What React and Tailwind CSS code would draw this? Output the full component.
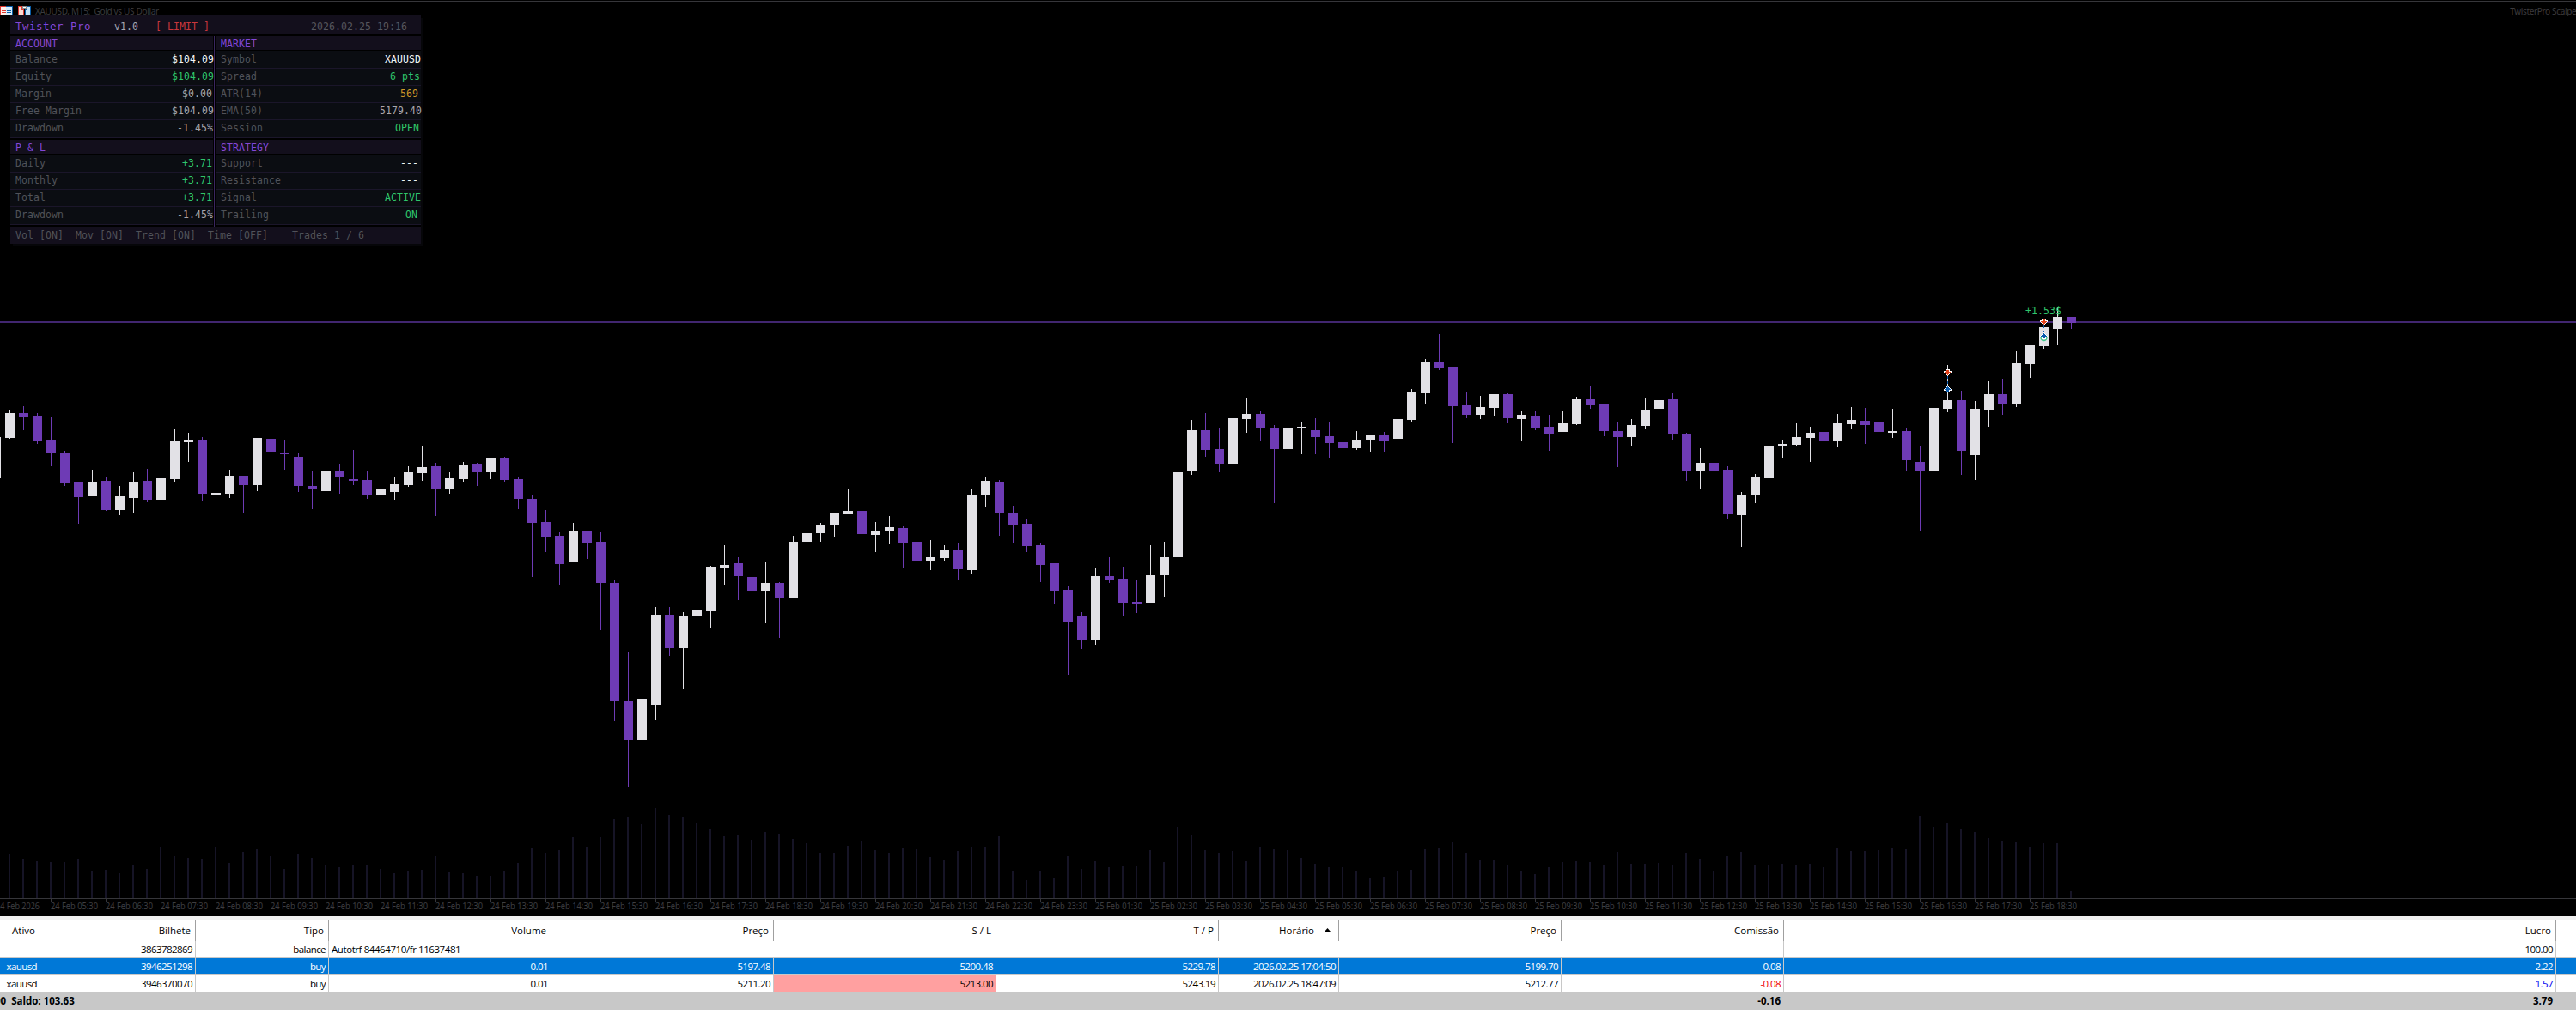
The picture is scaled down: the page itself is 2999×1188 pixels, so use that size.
import clsx from 'clsx';

const PITCH = 16;
const FIRST_X = 11;

// [bull/bear, high, body top, body bottom, low]
const CANDLES = [
  ['w', 477, 481, 510, 511], ['p', 473, 481, 486, 501], ['p', 481, 485, 514, 517], ['p', 486, 513, 528, 543],
  ['p', 525, 528, 562, 566], ['p', 561, 561, 579, 610], ['w', 547, 561, 578, 578], ['p', 555, 560, 594, 595],
  ['w', 566, 578, 594, 600], ['w', 550, 561, 580, 597], ['p', 546, 560, 582, 585], ['w', 549, 557, 582, 595],
  ['w', 500, 514, 558, 561], ['w', 504, 513, 515, 538], ['p', 509, 513, 575, 584], ['w', 555, 574, 576, 630],
  ['w', 547, 554, 575, 580], ['p', 554, 554, 565, 597], ['w', 510, 510, 565, 572], ['p', 508, 511, 527, 550],
  ['p', 512, 528, 529, 547], ['p', 528, 532, 566, 573], ['p', 548, 566, 569, 593], ['w', 516, 549, 572, 572],
  ['p', 540, 549, 555, 575], ['p', 524, 558, 560, 565], ['p', 548, 559, 577, 581], ['w', 553, 570, 577, 586],
  ['w', 556, 564, 573, 582], ['w', 543, 550, 565, 567], ['w', 519, 544, 551, 560], ['p', 539, 543, 569, 601],
  ['w', 550, 557, 569, 575], ['w', 538, 542, 558, 561], ['p', 539, 541, 550, 566], ['w', 534, 534, 550, 558],
  ['p', 532, 534, 559, 561], ['p', 555, 558, 581, 593], ['p', 577, 581, 609, 672], ['p', 594, 608, 625, 643],
  ['p', 620, 624, 657, 681], ['w', 609, 619, 655, 655], ['p', 618, 619, 632, 651], ['p', 620, 631, 679, 734],
  ['p', 676, 679, 816, 840], ['p', 759, 817, 862, 917], ['w', 795, 814, 862, 880], ['w', 707, 716, 821, 839],
  ['p', 707, 716, 755, 764], ['w', 713, 717, 755, 802], ['w', 675, 711, 718, 727], ['w', 659, 660, 712, 731],
  ['w', 635, 658, 661, 681], ['p', 649, 656, 671, 699], ['p', 655, 672, 688, 698], ['w', 655, 679, 688, 726],
  ['p', 678, 679, 696, 743], ['w', 624, 631, 696, 697], ['w', 599, 621, 631, 637], ['w', 609, 612, 621, 631],
  ['w', 597, 598, 612, 626], ['w', 570, 595, 599, 599], ['p', 589, 595, 622, 635], ['w', 608, 618, 623, 643],
  ['w', 601, 614, 619, 634], ['p', 613, 615, 632, 661], ['p', 625, 631, 653, 675], ['w', 629, 649, 653, 664],
  ['w', 635, 641, 650, 653], ['p', 632, 641, 663, 675], ['w', 569, 577, 664, 668], ['w', 556, 560, 577, 590],
  ['p', 559, 561, 597, 624], ['p', 589, 597, 611, 632], ['p', 605, 610, 636, 643], ['p', 632, 635, 658, 678],
  ['p', 656, 656, 688, 703], ['p', 683, 687, 724, 786], ['p', 713, 718, 745, 756], ['w', 661, 671, 745, 751],
  ['p', 649, 671, 675, 679], ['p', 660, 674, 702, 718], ['p', 676, 701, 703, 714], ['w', 635, 670, 702, 702],
  ['w', 631, 649, 670, 695], ['w', 541, 550, 649, 685], ['w', 489, 501, 549, 553], ['p', 481, 501, 524, 532],
  ['p', 498, 523, 540, 550], ['w', 484, 487, 541, 542], ['w', 463, 482, 488, 504], ['p', 479, 482, 499, 514],
  ['p', 495, 498, 523, 586], ['w', 481, 498, 523, 523], ['w', 492, 497, 499, 529], ['p', 487, 501, 509, 529],
  ['p', 491, 508, 516, 534], ['p', 509, 515, 522, 558], ['w', 502, 512, 522, 524], ['w', 507, 507, 513, 527],
  ['p', 503, 507, 514, 527], ['w', 474, 488, 511, 514], ['w', 453, 457, 489, 491], ['w', 418, 422, 458, 471],
  ['p', 389, 422, 429, 431], ['p', 428, 428, 473, 516], ['p', 457, 472, 483, 487], ['w', 461, 474, 483, 488],
  ['w', 459, 459, 475, 485], ['p', 458, 459, 487, 493], ['w', 479, 483, 488, 514], ['p', 479, 484, 498, 501],
  ['p', 483, 497, 505, 525], ['w', 479, 493, 503, 503], ['w', 462, 465, 494, 495], ['p', 449, 465, 472, 476],
  ['p', 471, 471, 502, 508], ['p', 491, 502, 509, 544], ['w', 488, 495, 509, 519], ['w', 464, 477, 496, 500],
  ['w', 460, 466, 476, 491], ['p', 458, 465, 505, 513], ['p', 504, 505, 548, 560], ['w', 522, 539, 548, 570],
  ['p', 537, 539, 548, 560], ['p', 543, 547, 599, 605], ['w', 573, 576, 600, 637], ['w', 552, 556, 577, 586],
  ['w', 514, 519, 557, 561], ['w', 513, 517, 520, 534], ['w', 493, 509, 518, 519], ['w', 497, 504, 510, 538],
  ['p', 502, 503, 514, 531], ['w', 482, 493, 514, 521], ['w', 474, 489, 494, 500], ['p', 475, 490, 495, 517],
  ['p', 476, 492, 503, 508], ['w', 476, 502, 504, 510], ['p', 499, 502, 536, 549], ['p', 520, 538, 548, 619],
  ['w', 466, 475, 549, 549], ['w', 425, 466, 476, 480], ['p', 455, 466, 525, 553], ['w', 467, 476, 530, 559],
  ['w', 444, 459, 478, 497], ['p', 442, 459, 470, 483], ['w', 409, 423, 470, 474], ['w', 402, 402, 424, 440],
  ['w', 371, 381, 403, 407], ['w', 357, 369, 383, 402], ['p', 369, 369, 376, 383],
];

// top of every volume bar, they all stand on the time axis
const VOLUMES = [
  995, 1001, 1003, 1004, 1004, 1000, 1014, 1013, 1017, 1008, 1012, 987, 997, 999, 1001, 987, 1005, 992, 989, 997,
  1012, 995, 999, 1007, 1010, 1007, 1008, 1012, 1017, 1014, 1013, 997, 1016, 1017, 1020, 1020, 1014, 1005, 988, 993,
  990, 975, 987, 975, 954, 951, 960, 941, 949, 952, 958, 965, 974, 972, 978, 969, 971, 977, 982, 993,
  993, 985, 979, 990, 994, 988, 989, 998, 1002, 991, 987, 986, 974, 1015, 1025, 1015, 1023, 997, 1012, 1003,
  1010, 1009, 1009, 990, 1004, 963, 973, 990, 994, 991, 1003, 987, 989, 990, 999, 1006, 1010, 1010, 1015, 1023,
  1021, 1014, 1013, 989, 988, 981, 993, 1002, 1002, 1008, 1014, 1018, 1010, 1004, 1003, 1004, 1007, 992, 1006, 1006,
  1005, 1007, 994, 1000, 1015, 997, 992, 1007, 1008, 1006, 1007, 1006, 1010, 988, 991, 991, 990, 988, 989, 950,
  963, 959, 966, 969, 976, 979, 981, 987, 982, 982, 1038,
];

const pad = (n) => String(n).padStart(2, '0');

const TIMES = [
  '24 Feb 2026',
  ...Array.from({ length: 19 }, (_, i) => `24 Feb ${pad(i + 5)}:30`),
  ...Array.from({ length: 18 }, (_, i) => `25 Feb ${pad(i + 1)}:30`),
];

const ACCOUNT = [
  ['Balance', '$104.09', 'text-[#f4f4f4]'],
  ['Equity', '$104.09', 'text-[#2fc56b]'],
  ['Margin', '$0.00', 'text-[#a6a6ae]'],
  ['Free Margin', '$104.09', 'text-[#a6a6ae]'],
  ['Drawdown', '-1.45%', 'text-[#a6a6ae]'],
];
const MARKET = [
  ['Symbol', 'XAUUSD', 'text-[#f4f4f4]'],
  ['Spread', '6 pts', 'text-[#2fc56b]'],
  ['ATR(14)', '569', 'text-[#cf9528]'],
  ['EMA(50)', '5179.40', 'text-[#a6a6ae]'],
  ['Session', 'OPEN', 'text-[#2fc56b]'],
];
const PNL = [
  ['Daily', '+3.71', 'text-[#2fc56b]'],
  ['Monthly', '+3.71', 'text-[#2fc56b]'],
  ['Total', '+3.71', 'text-[#2fc56b]'],
  ['Drawdown', '-1.45%', 'text-[#a6a6ae]'],
];
const STRATEGY = [
  ['Support', '---', 'text-[#f4f4f4]'],
  ['Resistance', '---', 'text-[#f4f4f4]'],
  ['Signal', 'ACTIVE', 'text-[#2fc56b]'],
  ['Trailing', 'ON', 'text-[#2fc56b]'],
];

// pixel rows of the deal arrow, [x, width]
const ARROW_EDGE = [[2, 5], [2, 5], [0, 9], [0, 9], [1, 7], [2, 5], [3, 3], [4, 1]];
const ARROW_FILL = [null, [3, 3], [3, 3], [1, 7], [2, 5], [3, 3], [4, 1], null];

function DealArrow({ x, y, up, color }) {
  const rowY = (i) => y + (up ? 7 - i : i);
  return (
    <g>
      {ARROW_EDGE.map(([dx, w], i) => (
        <rect key={i} x={x - 4 + dx} y={rowY(i)} width={w} height={1} fill="#fff" />
      ))}
      {ARROW_FILL.map((row, i) => row && (
        <rect key={i} x={x - 4 + row[0]} y={rowY(i)} width={row[1]} height={1} fill={color} />
      ))}
    </g>
  );
}

function Chart() {
  return (
    <svg width="2999" height="1067" viewBox="0 0 2999 1067" shapeRendering="crispEdges" className="block">
      <rect x="0" y="1" width="2999" height="1" fill="#36363a" />

      {/* volumes */}
      {VOLUMES.map((top, i) => (
        <rect key={i} x={FIRST_X - 1 + i * PITCH} y={top} width={2} height={1046 - top} fill="#161426" />
      ))}

      {/* time axis */}
      <rect x="0" y="1046" width="2999" height="1" fill="#36363a" />
      {TIMES.map((t, i) => {
        const x = FIRST_X + (i * 4 - 1) * PITCH;
        return (
          <g key={t}>
            <rect x={x} y={1047} width={1} height={4} fill="#36363a" />
            <text x={x} y={1059} textLength={i === 0 ? 51 : 55} lengthAdjust="spacingAndGlyphs" fill="#3d3d41" className="font-['Noto_Sans',sans-serif] text-[10px]">
              {t}
            </text>
          </g>
        );
      })}

      {/* bid line */}
      <rect x="0" y="374" width="2999" height="2" fill="#412670" />

      {/* candles */}
      <rect x="0" y="509" width="1" height="48" fill="#e2e1e6" />
      {CANDLES.map(([kind, high, top, bottom, low], i) => {
        const x = FIRST_X + i * PITCH;
        const fill = kind === 'w' ? '#e2e1e6' : '#6e3bb5';
        return (
          <g key={i} fill={fill}>
            <rect x={x} y={high} width={1} height={low - high} />
            <rect x={x - 5} y={top} width={11} height={bottom - top} />
          </g>
        );
      })}

      {/* deals */}
      <circle cx="2379.5" cy="393" r="3.5" fill="none" stroke="#3fc98c" strokeWidth="1.4" shapeRendering="auto" />
      <path d="M2379.5 379v9M2267.5 438v12" stroke="#0d5fb0" strokeWidth="1" strokeDasharray="3 3" />
      <DealArrow x={2379} y={371} color="#e2421c" />
      <DealArrow x={2379} y={387} up color="#0a5cae" />
      <DealArrow x={2267} y={430} color="#e2421c" />
      <DealArrow x={2267} y={449} up color="#0a5cae" />
      <text x="2358" y="366" textLength="42" fill="#2fc56b" className="font-['DejaVu_Sans_Mono',monospace] text-[11.5px]">
        +1.53$
      </text>
    </svg>
  );
}

function ChartTitle() {
  return (
    <div className="absolute top-[7px] left-0 flex h-3 w-full items-start overflow-hidden font-['Noto_Sans',sans-serif] text-[10px] leading-3 whitespace-pre text-[#3a3a3e]">
      <svg width="15" height="11" shapeRendering="crispEdges" className="mr-1.5 shrink-0">
        <rect width="8" height="11" fill="#dc3a32" />
        <rect x="1" y="1" width="6" height="9" fill="#fff1ec" />
        <path d="M2 3.5h5M2 5.5h5M2 7.5h5" stroke="#dc3a32" />
        <rect x="7" width="8" height="11" fill="#0a5ea8" />
        <rect x="7" y="1" width="7" height="9" fill="#d8ecfb" />
        <path d="M8 3.5h5M8 5.5h5M8 7.5h5" stroke="#0a5ea8" />
      </svg>
      <svg width="15" height="11" shapeRendering="crispEdges" className="mr-[5px] shrink-0">
        <path d="M0 0h5v4h2v7H0z" fill="#dc3a32" />
        <path d="M1 1h3v4h2v5H1z" fill="#fbdcd3" />
        <path d="M15 0h-5v4H8v7h7z" fill="#0a5ea8" />
        <path d="M14 1h-3v4H9v5h5z" fill="#c3e2f8" />
        <path d="M5 0h5v3H5z" fill="#8a8a8a" />
        <path d="M6 1h3v1H6z" fill="#fff" />
      </svg>
      <span className="tracking-[-0.32px]">XAUUSD, M15:  Gold vs US Dollar</span>
      <span className="mr-[-4px] ml-auto tracking-[-0.35px]">TwisterPro Scalper</span>
    </div>
  );
}

function Row({ label, value, tone, first, last }) {
  return (
    <div
      className={clsx(
        'flex justify-between border-b border-[#1b162a] bg-[#0b0d12] pl-1.5 leading-[18px]',
        first || last ? 'h-[21px]' : 'h-5',
        first && 'pt-px',
      )}
    >
      <span className="text-[#505259]">{label}</span>
      <span className={tone} style={{ marginRight: 6 - value.length }}>{value}</span>
    </div>
  );
}

function Block({ title, rows }) {
  return (
    <div>
      <div className="mb-px h-4 bg-[#130f1c] pl-1.5 leading-[18px] text-[#8447d6]">{title}</div>
      {rows.map(([label, value, tone], i) => (
        <Row key={label} label={label} value={value} tone={tone} first={i === 0} last={i === rows.length - 1} />
      ))}
    </div>
  );
}

function Section({ left, right }) {
  return (
    <div className="mt-0.5 grid grid-cols-[236px_1px_239px] gap-x-px">
      {left}
      <div className="-mb-0.5 bg-[#3a2660]" />
      {right}
    </div>
  );
}

function Panel() {
  return (
    <div className="absolute top-[18px] left-3 w-[478px] bg-black font-['DejaVu_Sans_Mono',monospace] text-[11.5px] tracking-[0.077px] whitespace-pre shadow-[3px_3px_0_#060609]">
      <div className="flex h-[22px] items-baseline bg-[#130f1c] pl-1.5 leading-[26px]">
        <span className="w-[115px] text-[12.5px] tracking-[0.475px] text-[#8447d6]">Twister Pro</span>
        <span className="w-12 text-[#a6a6ae]">v1.0</span>
        <span className="text-[#c8373c]">[ LIMIT ]</span>
        <span className="mr-4 ml-auto text-[#56565e]">2026.02.25 19:16</span>
      </div>
      <Section left={<Block title="ACCOUNT" rows={ACCOUNT} />} right={<Block title="MARKET" rows={MARKET} />} />
      <Section left={<Block title="P & L" rows={PNL} />} right={<Block title="STRATEGY" rows={STRATEGY} />} />
      <div className="relative mt-0.5 h-5 bg-[#130f1c] pl-1.5 leading-5 text-[#505259]">
        Vol [ON]  Mov [ON]  Trend [ON]  Time [OFF]    Trades 1 / 6
      </div>
    </div>
  );
}

const GRID = 'grid grid-cols-[47px_181px_155px_259px_259px_259px_259px_140px_259px_259px_899px_23px]';

const HEADERS = ['Ativo', 'Bilhete', 'Tipo', 'Volume', 'Preço', 'S / L', 'T / P', 'Horário', 'Preço', 'Comissão', 'Lucro'];

const TRADES = [
  { selected: true, cells: ['xauusd', '3946251298', 'buy', '0.01', '5197.48', '5200.48', '5229.78', '2026.02.25 17:04:50', '5199.70', '-0.08', '2.22'] },
  { selected: false, cells: ['xauusd', '3946370070', 'buy', '0.01', '5211.20', '5213.00', '5243.19', '2026.02.25 18:47:09', '5212.77', '-0.08', '1.57'] },
];

function Cell({ className, children }) {
  return <div className={clsx('border-r border-[#c8c8c8] pr-[3px] text-right tracking-[-0.58px]', className)}>{children}</div>;
}

function History() {
  return (
    <div className="h-[121px] overflow-hidden bg-white font-['Open_Sans',sans-serif] text-[11.5px] whitespace-pre text-black">
      <div className="h-1 bg-[#f0f0f0]" />
      <div className={clsx(GRID, 'h-[25px] border-t border-[#a0a0a0] leading-[23px]')}>
        {HEADERS.map((h, i) => (
          <div key={i} className="flex justify-end border-r border-[#a0a0a0] pr-[5px]">
            {h}
            {h === 'Horário' && (
              <svg width="7" height="4" className="mt-[9px] mr-1 ml-3">
                <path d="M3.5 0L7 4H0z" fill="#000" />
              </svg>
            )}
          </div>
        ))}
      </div>
      <div className={clsx(GRID, 'h-5 border-b border-[#c8c8c8] leading-[19px]')}>
        <Cell />
        <Cell>3863782869</Cell>
        <Cell className="tracking-[-0.2px]">balance</Cell>
        <div className="col-span-6 pl-[3px] tracking-[-0.42px]">Autotrf 84464710/fr 11637481</div>
        <Cell />
        <Cell>100.00</Cell>
      </div>
      {TRADES.map(({ selected, cells }) => (
        <div
          key={cells[1]}
          className={clsx(GRID, 'leading-[19px]', selected ? 'h-5 border-b border-[#c8c8c8] bg-[#0078d7] text-white' : 'h-[19px]')}
        >
          {cells.map((c, i) => (
            <Cell
              key={i}
              className={clsx(
                !selected && i === 5 && 'bg-[#ffa0a0]',
                !selected && i === 9 && 'text-[#f00000]',
                !selected && i === 10 && 'text-[#0000f0]',
              )}
            >
              {c}
            </Cell>
          ))}
        </div>
      ))}
      <div className="relative flex h-[21px] bg-[#c8c8c8] leading-[21px] font-bold">
        <span className="-ml-[6px] w-[2080px]">00  Saldo: 103.63</span>
        <span className="-ml-[60px] w-[59px] text-right">-0.16</span>
        <span className="w-[899px] text-right">3.79</span>
      </div>
    </div>
  );
}

export default function App() {
  return (
    <div className="h-[1188px] w-[2999px] overflow-hidden bg-black">
      <div className="relative h-[1067px]">
        <Chart />
        <ChartTitle />
        <Panel />
      </div>
      <History />
    </div>
  );
}
